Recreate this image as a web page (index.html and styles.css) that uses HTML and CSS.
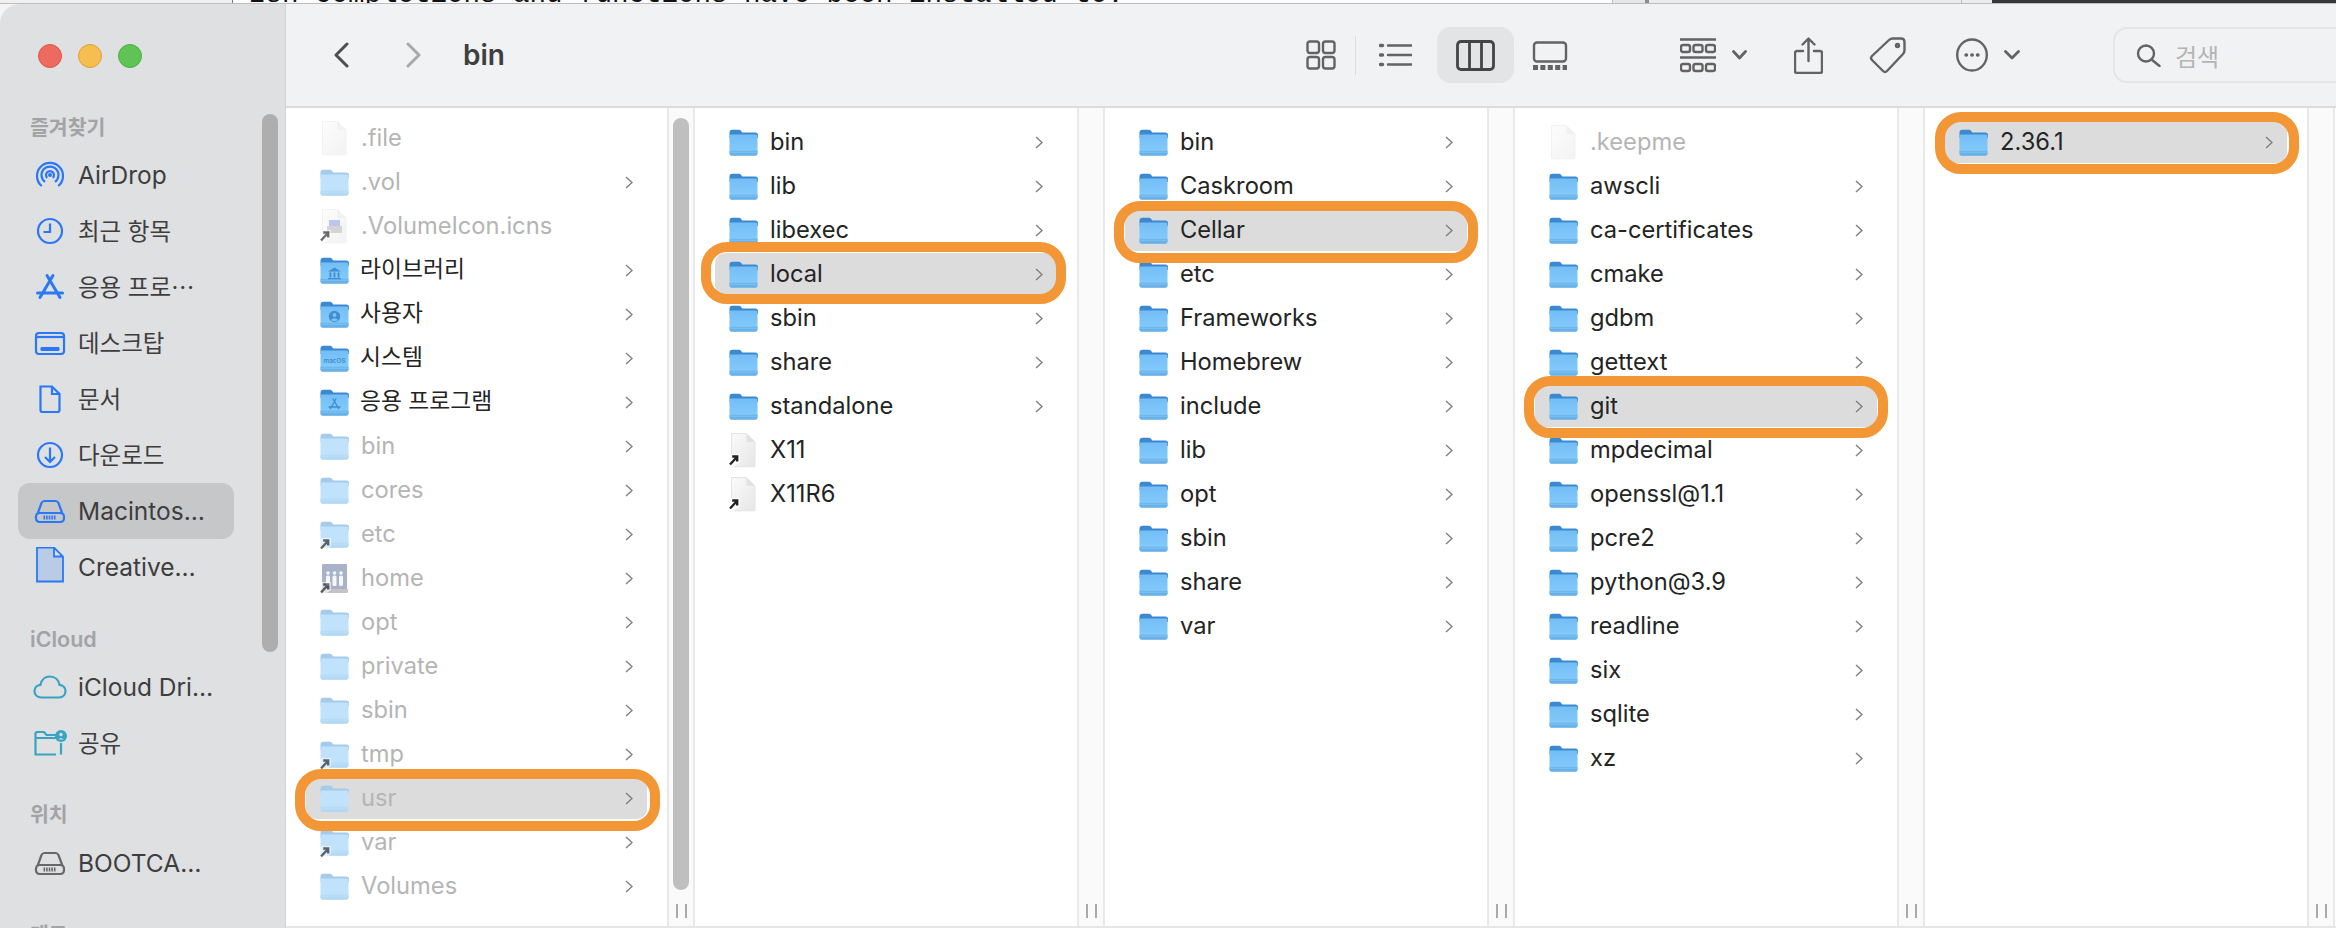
FILE: index.html
```html
<!DOCTYPE html>
<html lang="ko">
<head>
<meta charset="utf-8">
<title>bin</title>
<link rel="stylesheet" href="styles.css">
</head>
<body>
<svg class="defs" width="0" height="0" aria-hidden="true">
  <defs>
    <linearGradient id="fb" x1="0" y1="0" x2="0" y2="1"><stop offset="0" stop-color="#74bef6"/><stop offset="1" stop-color="#86cdfb"/></linearGradient>
    <linearGradient id="pg" x1="0" y1="0" x2="1" y2="1"><stop offset="0" stop-color="#fbfbfb"/><stop offset="1" stop-color="#e6e6e6"/></linearGradient>
    <symbol id="folder" viewBox="0 0 29 27" overflow="visible">
      <path d="M1 25V7h27v18q0 2-2 2H3q-2 0-2-2z" fill="#000" opacity=".22"/>
      <path d="M.5 9V3.5Q.5.8 3.2.8H10q1.2 0 2 1l1.3 1.6h12.9q2.8 0 2.8 2.8V9z" fill="#3a89d1"/>
      <path d="M.5 7q0-1.6 1.6-1.6h24.8Q28.500 5.400 28.500 7v17.400q0 2-2 2h-24q-2 0-2-2z" fill="url(#fb)"/>
      <path d="M.5 21.800h28v2.600q0 2-2 2h-24q-2 0-2-2z" fill="#68b2ec"/>
      <path d="M.5 23.200h28" stroke="#8ccbf6" stroke-width=".7"/>
    </symbol>
    <symbol id="folderd" viewBox="0 0 29 27" overflow="visible">
      <path d="M1 25V7h27v18q0 2-2 2H3q-2 0-2-2z" fill="#000" opacity=".12"/>
      <path d="M.5 9V3.5Q.5.8 3.2.8H10q1.2 0 2 1l1.3 1.6h12.9q2.8 0 2.8 2.8V9z" fill="#a4cbec"/>
      <path d="M.5 7q0-1.6 1.6-1.6h24.8Q28.500 5.400 28.500 7v17.400q0 2-2 2h-24q-2 0-2-2z" fill="#c0e2fb"/>
      <path d="M.5 21.800h28v2.600q0 2-2 2h-24q-2 0-2-2z" fill="#b2d9f6"/>
      <path d="M.5 23.200h28" stroke="#c6e4f9" stroke-width=".7"/>
    </symbol>
    <symbol id="doc" viewBox="0 0 29 27" overflow="visible">
      <path d="M2.500-3.500h15l8.500 8.500v24q0 .8-.8.8H3.300q-.8 0-.8-.8z" fill="url(#pg)" stroke="#e4e4e4"/>
      <path d="M17.500-3.500V5H26z" fill="#e2e2e2"/>
    </symbol>
    <symbol id="alias" viewBox="0 0 29 27" overflow="visible">
      <path d="M-2 29l2.500-11q.4-1 1.400-1H11v8l-7 5z" fill="#fff" opacity=".9"/>
      <path d="M1 27.500L7.500 20.500M3.200 19.500h5v5" fill="none" stroke="#222" stroke-width="2.400"/>
    </symbol>
    <symbol id="chev" viewBox="0 0 8 13"><path d="M1 1l6 5.500L1 12" fill="none" stroke="#7f7f7f" stroke-width="1.400"/></symbol>
  </defs>
</svg>

<div class="backdrop">
  <div class="bd-a"></div>
  <div class="bd-b"><span class="term">zsh completions and functions have been installed to:</span></div>
  <div class="bd-c"></div>
  <div class="bd-d"></div>
  <div class="bd-e"></div>
  <div class="bd-f"></div>
</div>

<div class="window">
  <aside class="sidebar">
    <div class="lights"><i class="light red"></i><i class="light yellow"></i><i class="light green"></i></div>
    <div class="sidehead first">즐겨찾기</div>
    <div class="sitem lat"><svg class="sicon" viewBox="0 0 36 36"><path d="M9.800 29A13 13 0 1 1 26.200 29M13 24.900A8.500 8.500 0 1 1 23 24.900M15.200 20.900A4 4 0 1 1 20.800 20.900"/><circle class="fill" cx="18" cy="18" r="2"/></svg><span>AirDrop</span></div>
    <div class="sitem"><svg class="sicon" viewBox="0 0 36 36"><circle cx="18" cy="18" r="12"/><path d="M18 10.500V19H11.500"/></svg><span>최근 항목</span></div>
    <div class="sitem"><svg class="sicon" viewBox="0 0 36 36"><path class="thick" d="M15 6.500L28 28.500M21 6.500L8 28.500M5.500 24H30.500"/></svg><span>응용 프로⋯</span></div>
    <div class="sitem"><svg class="sicon" viewBox="0 0 36 36"><rect x="4" y="8" width="28" height="21" rx="3"/><path d="M4 12H32"/><rect class="fill" x="8.500" y="22" width="19" height="4" rx="1"/></svg><span>데스크탑</span></div>
    <div class="sitem"><svg class="sicon" viewBox="0 0 36 36"><path d="M8.500 5.500H20L27.500 13V29q0 2-2 2H10.500q-2 0-2-2zM20 5.500V13H27.500"/></svg><span>문서</span></div>
    <div class="sitem"><svg class="sicon" viewBox="0 0 36 36"><circle cx="18" cy="18" r="12"/><path d="M18 10.500V24.500M13 20l5 5 5-5"/></svg><span>다운로드</span></div>
    <div class="sitem active lat"><svg class="sicon" viewBox="0 0 36 36"><path d="M5.500 21L9.500 10Q10.500 8 12.500 8H23.500Q25.500 8 26.500 10L30.500 21"/><rect x="4" y="20" width="28" height="9" rx="3.500"/><path class="ticks" d="M11.500 24.500H24.500"/></svg><span>Macintos…</span></div>
    <div class="sitem lat"><svg class="sicon tall" viewBox="0 0 36 36"><path class="docfill" d="M5 0.500H22L31 9.500V34.500H5zM22 0.500V9.500H31"/></svg><span>Creative…</span></div>
    <div class="sidehead latin">iCloud</div>
    <div class="sitem lat"><svg class="sicon teal" viewBox="0 0 36 36"><path d="M9.500 28.500C5 28.500 2.500 25.500 2.500 22C2.500 18.500 5 16 8.500 15.800C9.500 10.500 13.500 7.500 18 7.500C23 7.500 26.500 11 27.500 15.800C31 16 33.500 18.800 33.500 22C33.500 25.500 31 28.500 27 28.500Z"/></svg><span>iCloud Dri…</span></div>
    <div class="sitem"><svg class="sicon teal" viewBox="0 0 36 36"><path d="M24 29.500H3.500V8.500q0-1.500 1.500-1.500H12l2.500 3H24M3.500 13H24M29 18V29.500"/><circle class="fill" cx="29" cy="11" r="6"/><circle class="hole" cx="29" cy="9.500" r="1.700"/><path class="hole" d="M26.500 14.500q2.500-3 5 0z"/></svg><span>공유</span></div>
    <div class="sidehead">위치</div>
    <div class="sitem lat"><svg class="sicon gray" viewBox="0 0 36 36"><path d="M5.500 21L9.500 10Q10.500 8 12.500 8H23.500Q25.500 8 26.500 10L30.500 21"/><rect x="4" y="20" width="28" height="9" rx="3.500"/><path class="ticks" d="M11.500 24.500H24.500"/></svg><span>BOOTCA…</span></div>
    <div class="sidehead">태그</div>
    <div class="sthumb"></div>
  </aside>

  <main class="main">
    <header class="toolbar">
      <svg class="tb nav-back" width="16" height="26" viewBox="0 0 16 26"><path d="M14 2L3 13l11 11" stroke="#4f4f4f"/></svg>
      <svg class="tb nav-fwd" width="17" height="26" viewBox="0 0 17 26"><path d="M3 2l11 11L3 24" stroke="#a9a9a9"/></svg>
      <h1 class="title">bin</h1>
      <svg class="tb v-grid" width="30" height="30" viewBox="0 0 30 30"><rect x="1.500" y="1.500" width="11.500" height="11.500" rx="2.500"/><rect x="17" y="1.500" width="11.500" height="11.500" rx="2.500"/><rect x="1.500" y="17" width="11.500" height="11.500" rx="2.500"/><rect x="17" y="17" width="11.500" height="11.500" rx="2.500"/></svg>
      <span class="vsep"></span>
      <svg class="tb v-list" width="33" height="24" viewBox="0 0 33 24"><path d="M9 2.500H33M9 12H33M9 21.500H33"/><path class="dots" d="M1.500 2.500h2M1.500 12h2M1.500 21.500h2"/></svg>
      <span class="v-pill"><svg class="tb dark" width="39" height="31" viewBox="0 0 39 31"><rect x="1.500" y="1.500" width="36" height="28" rx="3.500"/><path d="M13.500 1.500V29.500M25.500 1.500V29.500"/></svg></span>
      <svg class="tb v-gal" width="36" height="29" viewBox="0 0 36 29"><rect x="2" y="1.500" width="32" height="19" rx="3"/><path class="film" d="M1 26.500H35"/></svg>
      <svg class="tb t-group" width="36" height="35" viewBox="0 0 36 35"><path d="M0 1.500H36M0 19.500H36"/><rect x="1" y="7" width="9" height="7" rx="2"/><rect x="13.500" y="7" width="9" height="7" rx="2"/><rect x="26" y="7" width="9" height="7" rx="2"/><rect x="1" y="26" width="9" height="7" rx="2"/><rect x="13.500" y="26" width="9" height="7" rx="2"/><rect x="26" y="26" width="9" height="7" rx="2"/></svg>
      <svg class="tb t-chev" width="15" height="10" viewBox="0 0 15 10"><path d="M1.500 1.500L7.500 8l6-6.500"/></svg>
      <svg class="tb t-share" width="29" height="37" viewBox="0 0 29 37"><path d="M9 14H3q-2 0-2 2V34q0 2 2 2H26q2 0 2-2V16q0-2-2-2H20M14.500 24V2M8.500 7.500L14.500 1.500L20.500 7.500"/></svg>
      <svg class="tb t-tag" width="37" height="37" viewBox="0 0 37 37"><path d="M20 3Q21.500 1.500 24 1.500H32Q35.500 1.500 35.500 5V13Q35.500 15.500 34 17L18 34Q16 36 14 34L3 23Q1 21 3 19Z"/><circle cx="28.500" cy="8.500" r="1.500"/></svg>
      <svg class="tb t-more" width="32" height="34" viewBox="0 0 32 34"><ellipse cx="16" cy="17" rx="14.800" ry="15.500"/><path class="dots" d="M10 17h.5M15.800 17h.5M21.500 17h.5"/></svg>
      <svg class="tb t-chev2" width="16" height="10" viewBox="0 0 16 10"><path d="M1.500 1.500L8 8l6.500-6.500"/></svg>
      <div class="search">
        <svg class="tb" width="25" height="23" viewBox="0 0 25 23"><circle cx="10" cy="9.500" r="8"/><path d="M15.500 15.500L23.500 22"/></svg>
        <span>검색</span>
      </div>
    </header>

    <div class="columns">
      <section class="col scrolled">
        <div class="row dim"><svg class="ico"><use class="fade" href="#doc"/></svg><span class="name">.file</span></div>
        <div class="row dim"><svg class="ico"><use href="#folderd"/></svg><span class="name">.vol</span><svg class="chev"><use href="#chev"/></svg></div>
        <div class="row dim"><svg class="ico" viewBox="0 0 29 27"><use class="fade" href="#doc" width="29" height="27"/><rect class="pic1" x="9" y="7" width="11" height="6"/><rect class="pic2" x="7" y="13" width="15" height="7"/><use class="arrow" href="#alias" width="29" height="27"/></svg><span class="name">.VolumeIcon.icns</span></div>
        <div class="row"><svg class="ico" viewBox="0 0 29 27"><use href="#folder" width="29" height="27"/><path class="mark" d="M8 14.500L14.500 10.500L21 14.500zM9.500 15.500h1.800v5h-1.800zM13.600 15.500h1.800v5h-1.800zM17.700 15.500h1.800v5h-1.800zM8 21h13v1.200H8z"/></svg><span class="name ko">라이브러리</span><svg class="chev"><use href="#chev"/></svg></div>
        <div class="row"><svg class="ico" viewBox="0 0 29 27"><use href="#folder" width="29" height="27"/><circle class="markf" cx="14.500" cy="15.500" r="5.700"/><circle class="hole2" cx="14.500" cy="14" r="1.900"/><path class="hole2" d="M10.800 19q3.700-3.400 7.400 0q-3.700 2.600-7.400 0z"/></svg><span class="name ko">사용자</span><svg class="chev"><use href="#chev"/></svg></div>
        <div class="row"><svg class="ico" viewBox="0 0 29 27"><use href="#folder" width="29" height="27"/><text class="mactext" x="14.500" y="17.500">macOS</text></svg><span class="name ko">시스템</span><svg class="chev"><use href="#chev"/></svg></div>
        <div class="row"><svg class="ico" viewBox="0 0 29 27"><use href="#folder" width="29" height="27"/><path class="markl" d="M12.800 9.500L18.800 20M16.200 9.500L10.200 20M8.500 18h12"/></svg><span class="name ko">응용 프로그램</span><svg class="chev"><use href="#chev"/></svg></div>
        <div class="row dim"><svg class="ico"><use href="#folderd"/></svg><span class="name">bin</span><svg class="chev"><use href="#chev"/></svg></div>
        <div class="row dim"><svg class="ico"><use href="#folderd"/></svg><span class="name">cores</span><svg class="chev"><use href="#chev"/></svg></div>
        <div class="row dim"><svg class="ico"><use href="#folderd"/><use class="arrow" href="#alias"/></svg><span class="name">etc</span><svg class="chev"><use href="#chev"/></svg></div>
        <div class="row dim"><svg class="ico" viewBox="0 0 29 27"><path class="book" d="M3-1h23q1 0 1 1v24H2V0q0-1 1-1z"/><path class="bookb" d="M1 24h27v3q0 1-1 1H2q-1 0-1-1z"/><g class="people"><circle cx="8" cy="8" r="1.800"/><rect x="6" y="10.500" width="4" height="10.500" rx="1.500"/><circle cx="14.500" cy="8" r="1.800"/><rect x="12.500" y="10.500" width="4" height="10.500" rx="1.500"/><circle cx="21" cy="8" r="1.800"/><rect x="19" y="10.500" width="4" height="10.500" rx="1.500"/></g><use class="arrow" href="#alias" width="29" height="27"/></svg><span class="name">home</span><svg class="chev"><use href="#chev"/></svg></div>
        <div class="row dim"><svg class="ico"><use href="#folderd"/></svg><span class="name">opt</span><svg class="chev"><use href="#chev"/></svg></div>
        <div class="row dim"><svg class="ico"><use href="#folderd"/></svg><span class="name">private</span><svg class="chev"><use href="#chev"/></svg></div>
        <div class="row dim"><svg class="ico"><use href="#folderd"/></svg><span class="name">sbin</span><svg class="chev"><use href="#chev"/></svg></div>
        <div class="row dim"><svg class="ico"><use href="#folderd"/><use class="arrow" href="#alias"/></svg><span class="name">tmp</span><svg class="chev"><use href="#chev"/></svg></div>
        <div class="row dim sel hl-usr"><svg class="ico"><use href="#folderd"/></svg><span class="name">usr</span><svg class="chev"><use href="#chev"/></svg></div>
        <div class="row dim"><svg class="ico"><use href="#folderd"/><use class="arrow" href="#alias"/></svg><span class="name">var</span><svg class="chev"><use href="#chev"/></svg></div>
        <div class="row dim"><svg class="ico"><use href="#folderd"/></svg><span class="name">Volumes</span><svg class="chev"><use href="#chev"/></svg></div>
      </section>
      <div class="track"><div class="thumb"></div><div class="grip"><i></i><i></i></div></div>

      <section class="col">
        <div class="row"><svg class="ico"><use href="#folder"/></svg><span class="name">bin</span><svg class="chev"><use href="#chev"/></svg></div>
        <div class="row"><svg class="ico"><use href="#folder"/></svg><span class="name">lib</span><svg class="chev"><use href="#chev"/></svg></div>
        <div class="row"><svg class="ico"><use href="#folder"/></svg><span class="name">libexec</span><svg class="chev"><use href="#chev"/></svg></div>
        <div class="row sel hl-local"><svg class="ico"><use href="#folder"/></svg><span class="name">local</span><svg class="chev"><use href="#chev"/></svg></div>
        <div class="row"><svg class="ico"><use href="#folder"/></svg><span class="name">sbin</span><svg class="chev"><use href="#chev"/></svg></div>
        <div class="row"><svg class="ico"><use href="#folder"/></svg><span class="name">share</span><svg class="chev"><use href="#chev"/></svg></div>
        <div class="row"><svg class="ico"><use href="#folder"/></svg><span class="name">standalone</span><svg class="chev"><use href="#chev"/></svg></div>
        <div class="row"><svg class="ico"><use href="#doc"/><use href="#alias"/></svg><span class="name">X11</span></div>
        <div class="row"><svg class="ico"><use href="#doc"/><use href="#alias"/></svg><span class="name">X11R6</span></div>
      </section>
      <div class="track"><div class="grip"><i></i><i></i></div></div>

      <section class="col">
        <div class="row"><svg class="ico"><use href="#folder"/></svg><span class="name">bin</span><svg class="chev"><use href="#chev"/></svg></div>
        <div class="row"><svg class="ico"><use href="#folder"/></svg><span class="name">Caskroom</span><svg class="chev"><use href="#chev"/></svg></div>
        <div class="row sel hl-cellar"><svg class="ico"><use href="#folder"/></svg><span class="name">Cellar</span><svg class="chev"><use href="#chev"/></svg></div>
        <div class="row"><svg class="ico"><use href="#folder"/></svg><span class="name">etc</span><svg class="chev"><use href="#chev"/></svg></div>
        <div class="row"><svg class="ico"><use href="#folder"/></svg><span class="name">Frameworks</span><svg class="chev"><use href="#chev"/></svg></div>
        <div class="row"><svg class="ico"><use href="#folder"/></svg><span class="name">Homebrew</span><svg class="chev"><use href="#chev"/></svg></div>
        <div class="row"><svg class="ico"><use href="#folder"/></svg><span class="name">include</span><svg class="chev"><use href="#chev"/></svg></div>
        <div class="row"><svg class="ico"><use href="#folder"/></svg><span class="name">lib</span><svg class="chev"><use href="#chev"/></svg></div>
        <div class="row"><svg class="ico"><use href="#folder"/></svg><span class="name">opt</span><svg class="chev"><use href="#chev"/></svg></div>
        <div class="row"><svg class="ico"><use href="#folder"/></svg><span class="name">sbin</span><svg class="chev"><use href="#chev"/></svg></div>
        <div class="row"><svg class="ico"><use href="#folder"/></svg><span class="name">share</span><svg class="chev"><use href="#chev"/></svg></div>
        <div class="row"><svg class="ico"><use href="#folder"/></svg><span class="name">var</span><svg class="chev"><use href="#chev"/></svg></div>
      </section>
      <div class="track"><div class="grip"><i></i><i></i></div></div>

      <section class="col">
        <div class="row dim"><svg class="ico"><use class="fade" href="#doc"/></svg><span class="name">.keepme</span></div>
        <div class="row"><svg class="ico"><use href="#folder"/></svg><span class="name">awscli</span><svg class="chev"><use href="#chev"/></svg></div>
        <div class="row"><svg class="ico"><use href="#folder"/></svg><span class="name">ca-certificates</span><svg class="chev"><use href="#chev"/></svg></div>
        <div class="row"><svg class="ico"><use href="#folder"/></svg><span class="name">cmake</span><svg class="chev"><use href="#chev"/></svg></div>
        <div class="row"><svg class="ico"><use href="#folder"/></svg><span class="name">gdbm</span><svg class="chev"><use href="#chev"/></svg></div>
        <div class="row"><svg class="ico"><use href="#folder"/></svg><span class="name">gettext</span><svg class="chev"><use href="#chev"/></svg></div>
        <div class="row sel hl-git"><svg class="ico"><use href="#folder"/></svg><span class="name">git</span><svg class="chev"><use href="#chev"/></svg></div>
        <div class="row"><svg class="ico"><use href="#folder"/></svg><span class="name">mpdecimal</span><svg class="chev"><use href="#chev"/></svg></div>
        <div class="row"><svg class="ico"><use href="#folder"/></svg><span class="name">openssl@1.1</span><svg class="chev"><use href="#chev"/></svg></div>
        <div class="row"><svg class="ico"><use href="#folder"/></svg><span class="name">pcre2</span><svg class="chev"><use href="#chev"/></svg></div>
        <div class="row"><svg class="ico"><use href="#folder"/></svg><span class="name">python@3.9</span><svg class="chev"><use href="#chev"/></svg></div>
        <div class="row"><svg class="ico"><use href="#folder"/></svg><span class="name">readline</span><svg class="chev"><use href="#chev"/></svg></div>
        <div class="row"><svg class="ico"><use href="#folder"/></svg><span class="name">six</span><svg class="chev"><use href="#chev"/></svg></div>
        <div class="row"><svg class="ico"><use href="#folder"/></svg><span class="name">sqlite</span><svg class="chev"><use href="#chev"/></svg></div>
        <div class="row"><svg class="ico"><use href="#folder"/></svg><span class="name">xz</span><svg class="chev"><use href="#chev"/></svg></div>
      </section>
      <div class="track"><div class="grip"><i></i><i></i></div></div>

      <section class="col">
        <div class="row sel hl-ver"><svg class="ico"><use href="#folder"/></svg><span class="name">2.36.1</span><svg class="chev"><use href="#chev"/></svg></div>
      </section>
      <div class="track"><div class="grip"><i></i><i></i></div></div>
    </div>
  </main>
</div>
</body>
</html>
```
FILE: styles.css
```css
*, *::before, *::after { box-sizing: border-box; }
html, body { margin: 0; padding: 0; }
body {
  width: 2336px;
  height: 928px;
  overflow: hidden;
  background: #f4f4f4;
  font-family: Inter, "Noto Sans CJK KR", sans-serif;
  color: #242424;
}
.defs { position: absolute; }

/* strip of the terminal window behind */
.backdrop {
  display: flex;
  height: 4px;
  overflow: hidden;
  border-bottom: 1px solid #bdbdbd;
  background: #ededed;
}
.bd-a { width: 233px; background: #f0f0f0; border-right: 1px solid #777; }
.bd-b { position: relative; width: 1380px; background: #fcfcfc; border-right: 1px solid #bbb; }
.term {
  position: absolute;
  left: 16px;
  top: -20px;
  font: 27.5px/30px "Liberation Mono", monospace;
  color: #111;
  white-space: pre;
}
.bd-c { width: 36px; background: #e6e6e6; border-right: 4px solid #8d8d8d; }
.bd-d { width: 313px; background: #ececec; border-right: 1px solid #bbb; }
.bd-e { width: 30px; background: #ececec; }
.bd-f { flex: 1; background: #34383a; }

.window {
  display: flex;
  height: 924px;
  background: #f1f2f4;
  border-top-left-radius: 20px;
  overflow: hidden;
}

/* sidebar */
.sidebar {
  position: relative;
  flex: 0 0 286px;
  background: #dee0e2;
  border-right: 1px solid #d2d3d5;
  overflow: hidden;
}
.lights { display: flex; gap: 16px; align-items: center; height: 104px; padding-left: 38px; }
.light { width: 24px; height: 24px; border-radius: 50%; }
.red { background: #ee6a5f; border: 1px solid #d9584e; }
.yellow { background: #f6bd50; border: 1px solid #dea23c; }
.green { background: #60c454; border: 1px solid #50ad45; }
.sidehead {
  height: 24px;
  margin: 32px 0 8px 30px;
  font-size: 20.5px;
  line-height: 24px;
  font-weight: 600;
  color: #a2a3a5;
}
.sidehead.first { margin-top: 8px; margin-bottom: 7px; }
.sidehead.latin { font-size: 21.500px; }
.sitem {
  display: flex;
  align-items: center;
  gap: 10px;
  width: 216px;
  height: 56px;
  margin-left: 18px;
  padding-left: 14px;
  border-radius: 12px;
  font-size: 23.5px;
  color: #3e3e3e;
  white-space: nowrap;
}
.sitem span { padding-bottom: 3px; }
.sitem.lat { font-size: 24.5px; }
.sitem.lat span { padding-bottom: 0; }
.sitem.active { background: #c6c7c9; }
.sicon { flex: none; width: 36px; height: 36px; fill: none; stroke: #2a78f5; stroke-width: 2.2; }
.sicon .fill { fill: #2a78f5; stroke: none; }
.sicon .thick { stroke-width: 3; stroke-linecap: round; }
.sicon .ticks { stroke-width: 4; stroke-dasharray: 1.6 1; }
.sicon .docfill { fill: #b9cbe5; stroke-width: 1.8; }
.sicon.tall { margin-top: -4px; }
.sicon.teal { stroke: #3ba3c2; }
.sicon.teal .fill { fill: #3ba3c2; }
.sicon.teal .hole { fill: #dee0e2; stroke: none; }
.sicon.gray { stroke: #686868; }
.sthumb {
  position: absolute;
  left: 262px;
  top: 110px;
  width: 16px;
  height: 538px;
  border-radius: 8px;
  background: #aeaeae;
}

/* toolbar */
.main { display: flex; flex: 1; flex-direction: column; min-width: 0; background: #fff; }
.toolbar {
  display: flex;
  align-items: center;
  flex: 0 0 104px;
  background: #f1f2f4;
  border-bottom: 2px solid #dcdcdc;
}
.tb { flex: none; fill: none; stroke: #636363; stroke-width: 2.4; stroke-linecap: round; stroke-linejoin: round; }
.nav-back { margin-left: 47px; stroke-width: 3; }
.nav-fwd { margin-left: 56px; stroke-width: 3; }
.title {
  margin: 0 0 0 41px;
  width: 60px;
  font-size: 28px;
  font-weight: 600;
  line-height: 34px;
  color: #3f3f3f;
}
.v-grid { margin-left: 783px; }
.vsep { flex: none; width: 1px; height: 39px; margin-left: 19px; background: #dcdddf; }
.v-list { margin-left: 23px; }
.v-list .dots, .t-more .dots { stroke-width: 3.4; }
.v-pill {
  display: flex;
  align-items: center;
  justify-content: center;
  flex: none;
  width: 77px;
  height: 56px;
  margin-left: 25px;
  border-radius: 14px;
  background: #e3e4e6;
}
.dark { stroke: #444; stroke-width: 2.8; }
.v-gal { margin-left: 18px; }
.v-gal .film { stroke-width: 5; stroke-linecap: butt; stroke-dasharray: 5 2.4; }
.t-group { margin-left: 112px; }
.t-chev { margin-left: 16px; stroke-width: 2.8; }
.t-share { margin-left: 47px; }
.t-tag { margin-left: 46px; }
.t-more { margin-left: 50px; }
.t-chev2 { margin-left: 16px; stroke-width: 2.8; }
.search {
  display: flex;
  align-items: center;
  gap: 14px;
  flex: none;
  width: 243px;
  height: 56px;
  margin-left: 93px;
  margin-right: -20px;
  padding-left: 21px;
  border: 2px solid #e4e5e7;
  border-radius: 14px;
  font-size: 24px;
  color: #b4b4b4;
}

/* columns */
.columns {
  display: flex;
  flex: 1;
  min-height: 0;
  border-bottom: 2px solid #e6e6e6;
  background: #fff;
}
.col { flex: 0 0 382px; padding-top: 13px; }
.col.scrolled { flex-basis: 381px; padding-top: 9px; }
.row {
  position: relative;
  display: flex;
  align-items: center;
  height: 42px;
  margin: 0 20px 2px;
  padding: 0 14px;
  border-radius: 10px;
}
.row.sel { background: #dcdcdc; }
.ico { flex: none; width: 29px; height: 27px; overflow: visible; }
.ico .fade { opacity: .48; }
.dim .arrow { opacity: .65; }
.name { flex: 1; margin-left: 12px; font-size: 23.7px; line-height: 30px; white-space: nowrap; color: #242424; }
.name.ko { margin-left: 11px; padding-bottom: 3px; font-size: 22.8px; }
.dim .name { color: #b5b5b5; }
.chev { flex: none; width: 8px; height: 13px; }
.mark { fill: #3f8dd2; }
.markf { fill: #3f8dd2; }
.hole2 { fill: #7cc4f8; }
.markl { fill: none; stroke: #3f8dd2; stroke-width: 1.4; }
.mactext { font: 600 6.4px Inter, sans-serif; fill: #3f8dd2; text-anchor: middle; }
.book { fill: #a8b2c8; }
.bookb { fill: #c4c4c4; }
.people { fill: #fff; opacity: .9; }
.pic1 { fill: #b9c8ec; }
.pic2 { fill: #d4d4d4; }

/* annotation rings */
.row[class*="hl-"]::after {
  content: "";
  position: absolute;
  z-index: 2;
  height: 62px;
  border: 10px solid #f29636;
  border-radius: 26px;
}
.hl-usr::after { left: -11px; right: -13px; top: -8px; }
.hl-local::after { left: -14px; right: -9px; top: -11px; }
.hl-cellar::after { left: -11px; right: -11px; top: -8px; }
.hl-git::after { left: -11px; right: -11px; top: -9px; }
.hl-ver::after { left: -10px; right: -12px; top: -9px; }

.track {
  display: flex;
  flex-direction: column;
  align-items: center;
  flex: 0 0 28px;
  padding: 10px 0 8px;
  background: #fafafa;
  border-left: 2px solid #e9e9e9;
  border-right: 2px solid #e9e9e9;
}
.thumb { width: 16px; height: 772px; border-radius: 8px; background: #bfbfbf; }
.grip { display: flex; gap: 7px; height: 14px; margin-top: auto; }
.grip i { display: block; width: 2px; background: #a9a9a9; }
```
